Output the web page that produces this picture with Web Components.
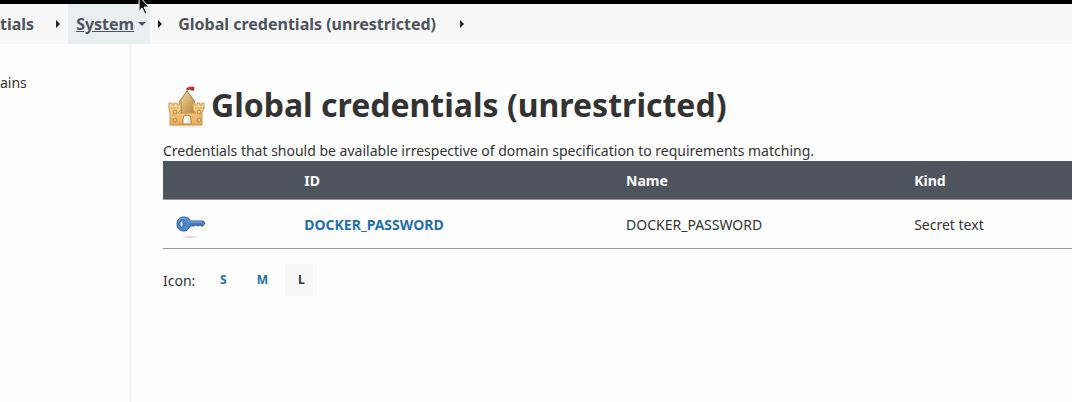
<!DOCTYPE html>
<html lang="en">
<head>
<meta charset="utf-8">
<title>Global credentials (unrestricted)</title>
<style>
  body {
    margin: 0;
    background: #fefefe;
    color: #333;
    font: 14px/20px "Noto Sans", sans-serif;
  }
</style>
</head>
<body>
<credentials-page></credentials-page>

<script>
class CrumbItem extends HTMLElement {
  constructor() {
    super();
    this._shadowDOM = this.attachShadow({ mode: "open" });
  }
  connectedCallback() {
    const menu = this.hasAttribute("active")
      ? `<svg class="menu" width="8" height="4" viewBox="0 0 8 4"><path d="M0 0h8L4 4z" fill="#4d545d"/></svg>`
      : "";
    this._shadowDOM.innerHTML = /*html*/ `
    <style>
        :host {
            display: flex;
            align-items: center;
        }
        a {
            display: flex;
            align-items: center;
            gap: 4px;
            height: 40px;
            padding: 0 4px 0 8px;
            color: #4d545d;
            font-size: 16px;
            font-weight: bold;
            text-decoration: none;
            white-space: nowrap;
        }
        :host([active]) a {
            background: #e9eff1;
        }
        :host([active]) span {
            text-decoration: underline;
        }
        :host([first]) a {
            padding: 0 2px 0 0;
        }
        .arrow {
            margin: 0 8px;
        }
        :host(:not([active])) .arrow {
            margin-left: 20px;
        }
    </style>
    <a href="#"><span><slot></slot></span>${menu}</a>
    <svg class="arrow" width="4" height="8" viewBox="0 0 4 8"><path d="M0 0v8l4-4z" fill="#222"/></svg>
    `;
  }
}
customElements.define("crumb-item", CrumbItem);

class CrumbBar extends HTMLElement {
  constructor() {
    super();
    this._shadowDOM = this.attachShadow({ mode: "open" });
  }
  connectedCallback() {
    this._shadowDOM.innerHTML = /*html*/ `
    <style>
        :host {
            display: block;
            border-top: 4px solid #000;
            background: #f8f8f8;
        }
        nav {
            display: flex;
            height: 40px;
        }
    </style>
    <nav aria-label="Breadcrumbs"><slot></slot></nav>
    `;
  }
}
customElements.define("crumb-bar", CrumbBar);

class CastleIcon extends HTMLElement {
  constructor() {
    super();
    this._shadowDOM = this.attachShadow({ mode: "open" });
  }
  connectedCallback() {
    this._shadowDOM.innerHTML = /*html*/ `
    <style>
        :host, svg {
            display: block;
        }
    </style>
    <svg width="48" height="48" viewBox="0 0 48 48" aria-hidden="true">
      <defs>
        <linearGradient id="tower" x1="0" y1="0" x2="1" y2="1">
          <stop offset="0" stop-color="#f3dda8"/>
          <stop offset="1" stop-color="#b5823b"/>
        </linearGradient>
        <linearGradient id="wall" x1="0" y1="0" x2="0" y2="1">
          <stop offset="0" stop-color="#f9dfa5"/>
          <stop offset="1" stop-color="#e6a955"/>
        </linearGradient>
      </defs>
      <ellipse cx="24" cy="45" rx="19" ry="2" fill="#eee"/>
      <path d="M24 14V7" stroke="#976f3c"/>
      <path d="M24 7q2-1 4-1t3 0v3q-2 1-3 0t-4 0z" fill="#d92935" stroke="#a72831" stroke-width=".5"/>
      <path d="M24 10l8 11h-1v12H18V21h-2z" fill="url(#tower)" stroke="#a27a43"/>
      <path d="M6 22h3v2h2v-2h3v2h2v-2h2v7l-3 3h18l-3-3v-7h2v2h2v-2h3v2h2v-2h2v6l-2 3v13H7V31l-1-3z" fill="url(#wall)" stroke="#cb9650"/>
      <path d="M7 27h9M32 27h9M9 34h3M36 34h3M16 42h3M29 36h3" stroke="#d9a45e"/>
      <path d="M20 43v-5a4 4 0 0 1 8 0v5z" fill="#fffaf0" stroke="#b58043"/>
      <path d="M26 36v7" stroke="#e6d3ab"/>
      <g fill="#f2c878" stroke="#b98445">
        <circle cx="12" cy="31" r="2"/>
        <circle cx="36" cy="31" r="2"/>
        <circle cx="12" cy="39" r="2"/>
        <circle cx="36" cy="39" r="2"/>
      </g>
    </svg>
    `;
  }
}
customElements.define("castle-icon", CastleIcon);

class KeyIcon extends HTMLElement {
  constructor() {
    super();
    this._shadowDOM = this.attachShadow({ mode: "open" });
  }
  connectedCallback() {
    this._shadowDOM.innerHTML = /*html*/ `
    <style>
        :host, svg {
            display: block;
        }
    </style>
    <svg width="32" height="32" viewBox="0 -1 32 32" aria-hidden="true">
      <defs>
        <radialGradient id="shade">
          <stop offset="0" stop-color="#bbb"/>
          <stop offset="1" stop-color="#fff" stop-opacity="0"/>
        </radialGradient>
      </defs>
      <ellipse cx="15" cy="27" rx="12" ry="2" fill="url(#shade)"/>
      <path d="M9 7c3 0 5 1 6 4h13l2 2-2 3h-2l-1-1-2 1-2-1-2 1h-4c-1 3-3 5-6 5-5 0-7-3-7-7s2-7 7-7z" fill="#4e84cb" stroke="#315c99"/>
      <path d="M3 12q1-4 6-4 4 0 5 4h13" fill="none" stroke="#7caae0"/>
      <path d="M14 14h13" stroke="#376eae"/>
      <rect x="5" y="11" width="3" height="6" rx="1" fill="#fff" stroke="#315c99"/>
    </svg>
    `;
  }
}
customElements.define("key-icon", KeyIcon);

class CredentialsTable extends HTMLElement {
  constructor() {
    super();
    this._shadowDOM = this.attachShadow({ mode: "open" });
  }
  connectedCallback() {
    this._shadowDOM.innerHTML = /*html*/ `
    <style>
        :host {
            display: block;
        }
        table {
            width: 100%;
            table-layout: fixed;
            border-collapse: collapse;
        }
        .icon { width: 14%; }
        .id { width: 35.4%; }
        .name { width: 31.7%; }
        th, td {
            padding: 2px 14px 0;
            text-align: left;
        }
        th {
            height: 36px;
            background: #4d545d;
            color: #fff;
        }
        td {
            height: 46px;
            border-top: 1px solid #999;
            border-bottom: 1px solid #999;
        }
        td:first-child {
            padding-left: 12px;
        }
        a {
            color: #1f6fae;
            font-weight: bold;
            text-decoration: none;
        }
    </style>
    <table>
      <colgroup><col class="icon"><col class="id"><col class="name"><col></colgroup>
      <thead>
        <tr><th></th><th>ID</th><th>Name</th><th>Kind</th></tr>
      </thead>
      <tbody>
        <tr>
          <td><key-icon></key-icon></td>
          <td><a href="#">DOCKER_PASSWORD</a></td>
          <td>DOCKER_PASSWORD</td>
          <td>Secret text</td>
        </tr>
      </tbody>
    </table>
    `;
  }
}
customElements.define("credentials-table", CredentialsTable);

class IconSize extends HTMLElement {
  constructor() {
    super();
    this._shadowDOM = this.attachShadow({ mode: "open" });
  }
  connectedCallback() {
    this._shadowDOM.innerHTML = /*html*/ `
    <style>
        :host {
            display: flex;
            align-items: center;
            gap: 12px;
        }
        .label {
            padding-top: 2px;
        }
        .sizes {
            display: flex;
            gap: 7px;
        }
        .sizes > * {
            width: 32px;
            font-size: 12px;
            line-height: 32px;
            font-weight: bold;
            text-align: center;
            text-decoration: none;
            color: #1f6fae;
        }
        .sizes > .current {
            background: #f8f8f8;
            color: #333;
        }
    </style>
    <span class="label">Icon:</span>
    <div class="sizes">
      <a href="#">S</a>
      <a href="#">M</a>
      <span class="current">L</span>
    </div>
    `;
  }
}
customElements.define("icon-size", IconSize);

class MousePointer extends HTMLElement {
  constructor() {
    super();
    this._shadowDOM = this.attachShadow({ mode: "open" });
  }
  connectedCallback() {
    this._shadowDOM.innerHTML = /*html*/ `
    <style>
        :host {
            position: absolute;
            top: -4px;
            left: 138px;
            pointer-events: none;
        }
        svg {
            display: block;
        }
    </style>
    <svg width="12" height="20" viewBox="0 0 12 20">
      <path d="M1 0v15l3-3 3 6 2-1-3-6h5z" fill="#111" stroke="#fff"/>
    </svg>
    `;
  }
}
customElements.define("mouse-pointer", MousePointer);

class CredentialsPage extends HTMLElement {
  constructor() {
    super();
    this._shadowDOM = this.attachShadow({ mode: "open" });
  }
  connectedCallback() {
    this._shadowDOM.innerHTML = /*html*/ `
    <style>
        :host {
            display: flex;
            flex-direction: column;
            min-height: 100vh;
            position: relative;
            overflow: hidden;
        }
        .content {
            flex: 1;
            display: flex;
        }
        aside {
            box-sizing: border-box;
            width: 131px;
            flex-shrink: 0;
            padding-top: 29px;
            border-right: 1px solid #edf1f3;
        }
        aside a {
            color: #333;
            text-decoration: none;
        }
        main {
            flex: 1;
            min-width: 0;
            padding: 37px 0 0 32px;
        }
        h1 {
            display: flex;
            align-items: center;
            margin: 0 0 12px;
            font-size: 32px;
            line-height: 48px;
        }
        p {
            margin: 0;
        }
        icon-size {
            margin-top: 15px;
        }
    </style>
    <crumb-bar>
      <crumb-item first>tials</crumb-item>
      <crumb-item active>System</crumb-item>
      <crumb-item>Global credentials (unrestricted)</crumb-item>
    </crumb-bar>
    <div class="content">
      <aside><a href="#">ains</a></aside>
      <main>
        <h1><castle-icon></castle-icon>Global credentials (unrestricted)</h1>
        <p>Credentials that should be available irrespective of domain specification to requirements matching.</p>
        <credentials-table></credentials-table>
        <icon-size></icon-size>
      </main>
    </div>
    <mouse-pointer></mouse-pointer>
    `;
  }
}
customElements.define("credentials-page", CredentialsPage);
</script>
</body>
</html>
